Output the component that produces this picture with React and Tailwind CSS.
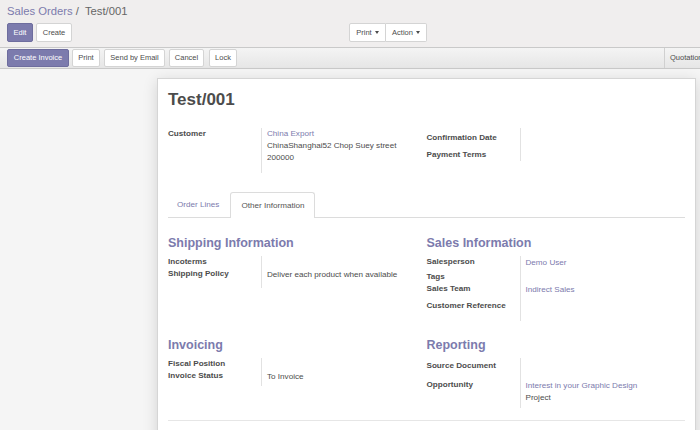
import React from 'react';

const purple = 'text-[#7c7bad]';

function Btn({ children, w, primary, className = '' }) {
  return (
    <div
      className={`flex items-center justify-center border rounded-[2px] text-[7.5px] leading-none whitespace-nowrap ${
        primary
          ? 'bg-[#7c7bad] border-[#6e6d9e] text-white'
          : 'bg-white border-[#d4d4d4] text-[#4c4c4c]'
      } ${w} ${className}`}
    >
      {children}
    </div>
  );
}

function Caret() {
  return (
    <span className="inline-block ml-[3px] w-0 h-0 border-x-[2.5px] border-t-[3px] border-x-transparent border-t-[#4c4c4c] align-middle" />
  );
}

// one label/value row of a form group
function Row({ label, h, lpt = 'pt-0', vpt = 'pt-0', children }) {
  return (
    <div className={`flex ${h}`}>
      <div className={`w-[93px] shrink-0 font-bold ${lpt}`}>{label}</div>
      <div className={`flex-1 border-l border-[#e2e2e2] pl-[5px] ${vpt}`}>{children}</div>
    </div>
  );
}

function Heading({ children }) {
  return <div className={`text-[12.5px] leading-[15px] font-bold ${purple} mb-[5px]`}>{children}</div>;
}

export default function App() {
  return (
    <div className="w-[700px] h-[430px] overflow-hidden bg-[#f5f5f5] font-['Liberation_Sans',Arial,sans-serif] text-[#4c4c4c] text-[8.125px] leading-[12px]">
      {/* control panel */}
      <div className="bg-[#f0eeee] h-[47px] px-[7px] pt-[4px]">
        <div className="h-[15px] text-[11.25px] leading-[15px]">
          <span className={purple}>Sales Orders</span>
          <span className="text-[#666]"> /&nbsp; Test/001</span>
        </div>
        <div className="flex mt-[4px] h-[19px]">
          <div className="flex gap-[3px] w-[342px]">
            <Btn w="w-[26px]" primary>Edit</Btn>
            <Btn w="w-[36px]">Create</Btn>
          </div>
          <div className="flex">
            <Btn w="w-[37px]" className="rounded-r-none">
              Print <Caret />
            </Btn>
            <Btn w="w-[41px]" className="rounded-l-none border-l-0">
              Action <Caret />
            </Btn>
          </div>
        </div>
      </div>

      {/* status bar */}
      <div className="h-[22px] border-y border-[#c9c9c9] bg-gradient-to-b from-[#f4f4f4] to-[#e6e6e6] flex justify-between pl-[7px]">
        <div className="flex items-start pt-[1px] h-[18px]">
          <Btn w="w-[62px] h-[18px]" primary>Create Invoice</Btn>
          <Btn w="w-[28px] h-[18px]" className="ml-[3px]">Print</Btn>
          <Btn w="w-[61px] h-[18px]" className="ml-[4px]">Send by Email</Btn>
          <Btn w="w-[35px] h-[18px]" className="ml-[4px]">Cancel</Btn>
          <Btn w="w-[28px] h-[18px]" className="ml-[5px]">Lock</Btn>
        </div>
        <div className="w-[36px] border-l border-[#d0d0d0] pl-[5px] overflow-hidden whitespace-nowrap text-[7.5px] leading-[20px] text-[#4c4c4c]">
          Quotation
        </div>
      </div>

      {/* sheet */}
      <div className="pt-[9px]">
        <div className="ml-[157px] w-[539px] h-[400px] bg-white border border-[#d5d5d5] shadow-[0_3px_14px_rgba(0,0,0,0.14)] px-[10px]">
          <div className="mt-[10px] text-[17px] leading-[22px] font-bold text-[#4c4c4c]">Test/001</div>

          <div className="flex mt-[17px]">
            <div className="w-[259px]">
              <Row label="Customer" h="h-[45px]">
                <div className={purple}>China Export</div>
                <div>ChinaShanghai52 Chop Suey street</div>
                <div>200000</div>
              </Row>
            </div>
            <div className="w-[259px]">
              <Row label="Confirmation Date" h="h-[19px]" lpt="pt-[4px]" />
              <Row label="Payment Terms" h="h-[14px]" lpt="pt-[2px]" />
            </div>
          </div>

          {/* tabs */}
          <div className="flex mt-[19px] h-[26px] border-b border-[#dcdcdc]">
            <div className={`px-[9px] h-[25px] leading-[25px] whitespace-nowrap ${purple} mr-[2px]`}>Order Lines</div>
            <div className="px-[10px] h-[26px] leading-[25px] whitespace-nowrap bg-white border border-b-0 border-[#dcdcdc] rounded-t-[3px] text-[#555]">
              Other Information
            </div>
          </div>

          <div className="flex mt-[18px]">
            <div className="w-[259px]">
              <Heading>Shipping Information</Heading>
              <Row label="Incoterms" h="h-[12px]" />
              <Row label="Shipping Policy" h="h-[20px]" vpt="pt-[1px]">
                Deliver each product when available
              </Row>
            </div>
            <div className="w-[259px]">
              <Heading>Sales Information</Heading>
              <Row label="Salesperson" h="h-[15px]" vpt="pt-[1px]">
                <span className={purple}>Demo User</span>
              </Row>
              <Row label="Tags" h="h-[12px]" />
              <Row label="Sales Team" h="h-[17px]" vpt="pt-[1px]">
                <span className={purple}>Indirect Sales</span>
              </Row>
              <Row label="Customer Reference" h="h-[21px]" />
            </div>
          </div>

          <div className="flex mt-[17px]">
            <div className="w-[259px]">
              <Heading>Invoicing</Heading>
              <Row label="Fiscal Position" h="h-[12px]" />
              <Row label="Invoice Status" h="h-[16px]" vpt="pt-[1px]">
                To Invoice
              </Row>
            </div>
            <div className="w-[259px]">
              <Heading>Reporting</Heading>
              <Row label="Source Document" h="h-[21px]" lpt="pt-[2px]" />
              <Row label="Opportunity" h="h-[29px]" vpt="pt-[1px]">
                <div className={purple}>Interest in your Graphic Design</div>
                <div>Project</div>
              </Row>
            </div>
          </div>

          <div className="mt-[12px] border-t border-[#e6e6e6]" />
        </div>
      </div>
    </div>
  );
}
